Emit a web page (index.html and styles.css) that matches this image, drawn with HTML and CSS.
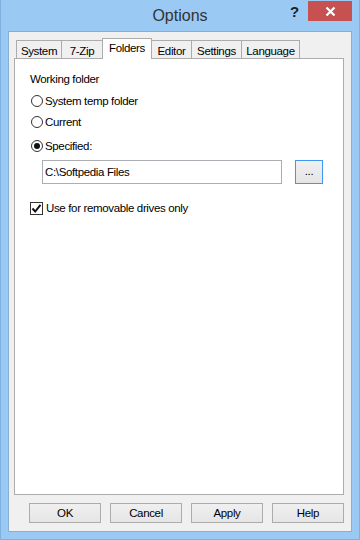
FILE: index.html
```html
<!DOCTYPE html>
<html lang="en">
<head>
    <meta charset="UTF-8">
    <title>Options</title>
    <link rel="stylesheet" href="styles.css">
</head>
<body>
    <div class="window">
        <!-- Barra de titulo -->
        <div class="titlebar">
            <span class="title">Options</span>
            <span class="help-btn">?</span>
            <span class="close-btn">
                <svg width="11" height="11" viewBox="0 0 11 11">
                    <path d="M1.5 1.5 L9.5 9.5 M9.5 1.5 L1.5 9.5" stroke="#fff" stroke-width="2.2"/>
                </svg>
            </span>
        </div>

        <div class="client">
            <!-- Pestañas -->
            <div class="tabs">
                <div class="tab tab-system">System</div>
                <div class="tab tab-zip">7-Zip</div>
                <div class="tab tab-folders active">Folders</div>
                <div class="tab tab-editor">Editor</div>
                <div class="tab tab-settings">Settings</div>
                <div class="tab tab-language">Language</div>
            </div>

            <div class="panel">
                <div class="label-row">Working folder</div>

                <label class="radio-row row-temp">
                    <span class="radio"></span>System temp folder
                </label>
                <label class="radio-row row-current">
                    <span class="radio"></span>Current
                </label>
                <label class="radio-row row-specified">
                    <span class="radio checked"></span>Specified:
                </label>

                <div class="path-row">
                    <div class="textbox">C:\Softpedia Files</div>
                    <div class="browse-btn">...</div>
                </div>

                <label class="check-row">
                    <span class="checkbox">
                        <svg width="11" height="11" viewBox="0 0 11 11">
                            <path d="M1.5 5.5 L4.2 8.5 L9.5 1.8" fill="none" stroke="#111" stroke-width="2"/>
                        </svg>
                    </span>Use for removable drives only
                </label>
            </div>

            <!-- Botones inferiores -->
            <div class="buttons">
                <div class="button">OK</div>
                <div class="button">Cancel</div>
                <div class="button">Apply</div>
                <div class="button">Help</div>
            </div>
        </div>
    </div>
</body>
</html>
```

FILE: styles.css
```css
body {
    margin: 0;
    padding: 0;
    background-color: #9ac9f3;
    font-family: "Liberation Sans", Arial, sans-serif;
    font-size: 11.5px;
    letter-spacing: -0.35px;
    color: #000;
}

.window {
    width: 360px;
    height: 540px;
    box-sizing: border-box;
    border: 1px solid #7fb1e0;
    border-top: none;
}

/* Barra de titulo */
.titlebar {
    height: 31px;
    position: relative;
    display: flex;
    justify-content: center;
    align-items: center;
    letter-spacing: 0;
}

.title {
    font-size: 16px;
    color: #333;
    margin-top: 1px;
}

.help-btn {
    position: absolute;
    left: 289px;
    top: 3px;
    font-size: 15px;
    font-weight: bold;
    color: #222;
}

.close-btn {
    position: absolute;
    left: 307px;
    top: 1px;
    width: 44px;
    height: 20px;
    background-color: #c75050;
    display: flex;
    justify-content: center;
    align-items: center;
}

/* Area cliente */
.client {
    margin: 0 7px 0 7px;
    height: 501px;
    box-sizing: border-box;
    background-color: #f0f0f0;
    border: 1px solid #8aaed2;
    padding: 6px 7px 0 5px;
}

.tabs {
    display: flex;
    height: 20px;
    padding-left: 2px;
    align-items: flex-end;
    position: relative;
    z-index: 1;
}

.tab {
    height: 18px;
    box-sizing: border-box;
    border: 1px solid #acacac;
    border-bottom: none;
    margin-right: -1px;
    background-color: #f0f0f0;
    display: flex;
    justify-content: center;
    align-items: center;
    padding-top: 2px;
}

.tab-system { width: 46px; }
.tab-zip { width: 42px; }
.tab-folders { width: 50px; }
.tab-editor { width: 41px; }
.tab-settings { width: 51px; }
.tab-language { width: 59px; }

.tab.active {
    height: 21px;
    background-color: #fff;
    margin-bottom: -1px;
    padding-top: 0;
    padding-bottom: 2px;
}

.panel {
    width: 330px;
    height: 437px;
    box-sizing: border-box;
    background-color: #fff;
    border: 1px solid #acacac;
    padding-left: 15px;
    display: flex;
    flex-direction: column;
}

.label-row {
    height: 16px;
    line-height: 16px;
    margin-top: 12px;
}

.radio-row {
    height: 20px;
    display: flex;
    align-items: center;
}

.row-temp { margin-top: 4px; }
.row-current { margin-top: 1px; }
.row-specified { margin-top: 4px; }

.radio {
    width: 12px;
    height: 12px;
    box-sizing: border-box;
    border: 1px solid #333;
    border-radius: 50%;
    margin: 0 2px 0 1px;
    display: flex;
    justify-content: center;
    align-items: center;
}

.radio.checked::after {
    content: "";
    width: 6px;
    height: 6px;
    border-radius: 50%;
    background-color: #111;
}

.path-row {
    display: flex;
    margin-top: 4px;
    margin-left: 12px;
    height: 24px;
}

.textbox {
    width: 240px;
    box-sizing: border-box;
    border: 1px solid #abadb3;
    padding-left: 2px;
    display: flex;
    align-items: center;
}

.browse-btn {
    width: 28px;
    margin-left: 13px;
    box-sizing: border-box;
    border: 1px solid #3c98f0;
    background: linear-gradient(#f0f0f0, #e5e5e5);
    display: flex;
    justify-content: center;
    align-items: center;
    padding-bottom: 2px;
}

.check-row {
    height: 16px;
    margin-top: 16px;
    display: flex;
    align-items: center;
}

.checkbox {
    width: 13px;
    height: 13px;
    box-sizing: border-box;
    border: 1px solid #333;
    background-color: #fff;
    margin-right: 3px;
    display: flex;
    justify-content: center;
    align-items: center;
}

/* Botones */
.buttons {
    display: flex;
    gap: 9px;
    margin-top: 8px;
    padding-left: 15px;
}

.button {
    width: 72px;
    height: 20px;
    box-sizing: border-box;
    border: 1px solid #acacac;
    background: linear-gradient(#f0f0f0, #e5e5e5);
    display: flex;
    justify-content: center;
    align-items: center;
}
```
